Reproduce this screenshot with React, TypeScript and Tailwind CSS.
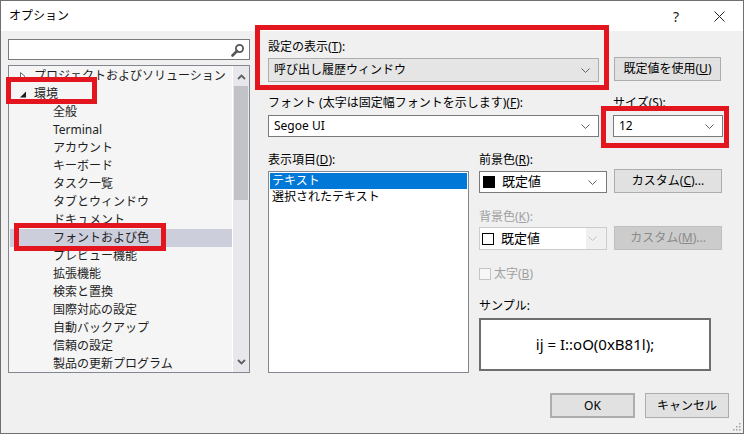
import type { ReactNode } from "react";

const FONT = "font-['Noto_Sans','Noto_Sans_CJK_JP',sans-serif]";

const treeItems: { label: string; level: number; arrow?: "closed" | "open"; selected?: boolean }[] = [
  { label: "プロジェクトおよびソリューション", level: 1, arrow: "closed" },
  { label: "環境", level: 1, arrow: "open" },
  { label: "全般", level: 2 },
  { label: "Terminal", level: 2 },
  { label: "アカウント", level: 2 },
  { label: "キーボード", level: 2 },
  { label: "タスク一覧", level: 2 },
  { label: "タブとウィンドウ", level: 2 },
  { label: "ドキュメント", level: 2 },
  { label: "フォントおよび色", level: 2, selected: true },
  { label: "プレビュー機能", level: 2 },
  { label: "拡張機能", level: 2 },
  { label: "検索と置換", level: 2 },
  { label: "国際対応の設定", level: 2 },
  { label: "自動バックアップ", level: 2 },
  { label: "信頼の設定", level: 2 },
  { label: "製品の更新プログラム", level: 2 },
];

function Chevron({ color = "#606060" }: { color?: string }) {
  return (
    <svg width="9" height="5" viewBox="0 0 9 5" className="shrink-0">
      <polyline points="0.5,0.5 4.5,4.5 8.5,0.5" fill="none" stroke={color} strokeWidth="1" />
    </svg>
  );
}

function Label({ children, disabled }: { children: ReactNode; disabled?: boolean }) {
  return (
    <div className={`h-[15px] leading-[15px] text-[12px] whitespace-nowrap ${disabled ? "text-[#a0a0a0]" : "text-black"}`}>
      {children}
    </div>
  );
}

function Combo({ value, className, readOnly }: { value: string; className: string; readOnly?: boolean }) {
  return (
    <div
      className={`flex items-center justify-between border pl-[5px] pr-[8px] text-[12px] ${
        readOnly ? "bg-[#e5e5e5] border-[#adadad]" : "bg-white border-[#7a7a7a]"
      } ${className}`}
    >
      <span>{value}</span>
      <Chevron />
    </div>
  );
}

function Button({ children, className, disabled }: { children: ReactNode; className: string; disabled?: boolean }) {
  return (
    <div
      className={`flex items-center justify-center border text-[12px] ${
        disabled ? "bg-[#cccccc] border-[#bfbfbf] text-[#8a8a8a]" : "bg-[#e1e1e1] border-[#adadad] text-black"
      } ${className}`}
    >
      {children}
    </div>
  );
}

function TreeArrow({ kind }: { kind: "closed" | "open" }) {
  if (kind === "closed") {
    return (
      <svg width="8" height="9" viewBox="0 0 8 9">
        <polygon points="1.5,0.5 6,4.5 1.5,8.5" fill="#fff" stroke="#6a6a6a" strokeWidth="1" />
      </svg>
    );
  }
  return (
    <svg width="8" height="9" viewBox="0 0 8 9">
      <polygon points="7,1.5 7,7.5 1,7.5" fill="#1e1e1e" />
    </svg>
  );
}

export default function App() {
  return (
    <div className={`${FONT} relative w-[744px] h-[434px] border border-[#6f6f6f] bg-[#f0f0f0] flex flex-col overflow-hidden text-black`}>
      {/* title bar */}
      <div className="h-[30px] bg-white flex items-center pl-[8px] shrink-0">
        <span className="text-[12px]">オプション</span>
        <div className="ml-auto flex items-center">
          <span className="text-[14px] text-[#222] mr-[35px]">?</span>
          <svg width="11" height="11" viewBox="0 0 11 11" className="mr-[18px]">
            <path d="M0.5 0.5 L10.5 10.5 M10.5 0.5 L0.5 10.5" stroke="#222" strokeWidth="1" />
          </svg>
        </div>
      </div>

      <div className="flex">
        {/* left column */}
        <div className="ml-[7px] mt-[8px] w-[242px] flex flex-col">
          <div className="h-[21px] bg-white border border-[#7a7a7a] flex items-center justify-end pr-[4px]">
            <svg width="14" height="14" viewBox="0 0 14 14">
              <circle cx="8.5" cy="5.5" r="3.6" fill="none" stroke="#555" strokeWidth="1.8" />
              <path d="M6 8 L1.5 12.5" stroke="#555" strokeWidth="2.6" strokeLinecap="round" />
            </svg>
          </div>
          <div className="mt-[5px] h-[308px] border border-[#828790] bg-[#f5f5f5] flex overflow-hidden">
            <div className="flex-1 flex flex-col mt-[1px] pl-[1px]">
              {treeItems.map((item) => (
                <div
                  key={item.label}
                  className={`h-[18px] leading-[18px] text-[12px] text-[#1e1e1e] flex items-center whitespace-nowrap ${
                    item.selected ? "bg-[#cccedb]" : ""
                  }`}
                >
                  {item.level === 1 ? (
                    <>
                      <span className="ml-[9px] w-[8px] flex items-center">{item.arrow && <TreeArrow kind={item.arrow} />}</span>
                      <span className="ml-[7px]">{item.label}</span>
                    </>
                  ) : (
                    <span className="ml-[43px]">{item.label}</span>
                  )}
                </div>
              ))}
            </div>
            <div className="w-[17px] bg-[#e8e8ec] border-l border-white flex flex-col items-center">
              <svg width="9" height="6" viewBox="0 0 9 6" className="mt-[8px]">
                <polyline points="1,5 4.5,1.5 8,5" fill="none" stroke="#606060" strokeWidth="1.8" />
              </svg>
              <div className="mt-[6px] w-[14px] h-[114px] bg-[#c2c3c9]" />
              <svg width="9" height="6" viewBox="0 0 9 6" className="mt-auto mb-[7px]">
                <polyline points="1,1 4.5,4.5 8,1" fill="none" stroke="#606060" strokeWidth="1.8" />
              </svg>
            </div>
          </div>
        </div>

        {/* right column */}
        <div className="ml-[18px] mt-[8px] w-[455px] flex flex-col">
          <div className="flex items-end">
            <div className="w-[331px]">
              <Label>
                設定の表示(<u>T</u>):
              </Label>
              <Combo value="呼び出し履歴ウィンドウ" readOnly className="mt-[4px] h-[24px]" />
            </div>
            <Button className="ml-[15px] w-[107px] h-[24px] mb-[1px]">
              既定値を使用(<u>U</u>)
            </Button>
          </div>

          <div className="flex mt-[13px]">
            <div className="w-[331px]">
              <Label>
                フォント (太字は固定幅フォントを示します)(<u>F</u>):
              </Label>
              <Combo value="Segoe UI" className="mt-[5px] h-[22px]" />
            </div>
            <div className="ml-[14px] w-[110px]">
              <Label>
                サイズ(<u>S</u>):
              </Label>
              <Combo value="12" className="mt-[5px] h-[22px]" />
            </div>
          </div>

          <div className="flex mt-[15px]">
            <div className="w-[201px]">
              <Label>
                表示項目(<u>D</u>):
              </Label>
              <div className="mt-[4px] h-[202px] bg-white border border-[#828790] p-[1px] text-[12px]">
                <div className="h-[16px] leading-[16px] bg-[#0078d7] text-white pl-[2px]">テキスト</div>
                <div className="h-[16px] leading-[16px] pl-[2px]">選択されたテキスト</div>
              </div>
            </div>

            <div className="ml-[10px] flex flex-col">
              <Label>
                前景色(<u>R</u>):
              </Label>
              <div className="flex items-end mt-[2px]">
                <div className="w-[128px] h-[22px] bg-white border border-[#7a7a7a] flex items-center pl-[3px] pr-[9px]">
                  <span className="w-[12px] h-[12px] bg-black" />
                  <span className="ml-[7px] text-[13px]">既定値</span>
                  <span className="ml-auto flex">
                    <Chevron />
                  </span>
                </div>
                <Button className="ml-[7px] w-[108px] h-[24px]">
                  カスタム(<u>C</u>)...
                </Button>
              </div>

              <div className="mt-[16px]">
                <Label disabled>
                  背景色(<u>K</u>):
                </Label>
              </div>
              <div className="flex items-end mt-[2px]">
                <div className="w-[128px] h-[23px] bg-[#f0f0f0] border border-[#cccccc] flex items-center">
                  <div className="w-[106px] h-full bg-white flex items-center pl-[2px]">
                    <span className="w-[12px] h-[12px] bg-white border border-black" />
                    <span className="ml-[7px] text-[13px]">既定値</span>
                  </div>
                  <span className="ml-auto mr-[9px] flex">
                    <Chevron color="#c4c4c4" />
                  </span>
                </div>
                <Button disabled className="ml-[7px] w-[108px] h-[24px]">
                  カスタム(<u>M</u>)...
                </Button>
              </div>

              <div className="mt-[16px] h-[15px] flex items-center">
                <span className="w-[12px] h-[12px] border border-[#c5c5c5] bg-[#f7f7f7]" />
                <span className="ml-[3px] text-[12px] text-[#a0a0a0]">
                  太字(<u>B</u>)
                </span>
              </div>

              <div className="mt-[17px]">
                <Label>サンプル:</Label>
              </div>
              <div className="mt-[5px] w-[232px] h-[53px] bg-white border-2 border-[#6e6e6e] flex items-center justify-center text-[15px]">
                ij = I::oO(0xB81l);
              </div>
            </div>
          </div>
        </div>
      </div>

      {/* dialog buttons */}
      <div className="flex justify-end pr-[14px] mt-[20px]">
        <Button className="w-[85px] h-[25px] border-2 border-[#0078d7]">OK</Button>
        <Button className="ml-[10px] w-[84px] h-[25px]">キャンセル</Button>
      </div>

      {/* resize grip */}
      <svg width="9" height="9" viewBox="0 0 9 9" className="absolute right-[2px] bottom-[2px]">
        {[
          [7, 1],
          [4, 4],
          [7, 4],
          [1, 7],
          [4, 7],
          [7, 7],
        ].map(([x, y]) => (
          <rect key={`${x}-${y}`} x={x} y={y} width="1.5" height="1.5" fill="#a0a0a0" />
        ))}
      </svg>

      {/* red annotation boxes */}
      <div className="absolute left-[5px] top-[76px] w-[91px] h-[27px] border-[5px] border-[#e3161f]" />
      <div className="absolute left-[13px] top-[222px] w-[152px] h-[28px] border-[5px] border-[#e3161f]" />
      <div className="absolute left-[254px] top-[24px] w-[354px] h-[65px] border-[5px] border-[#e3161f]" />
      <div className="absolute left-[600px] top-[105px] w-[128px] h-[42px] border-[5px] border-[#e3161f]" />
    </div>
  );
}
